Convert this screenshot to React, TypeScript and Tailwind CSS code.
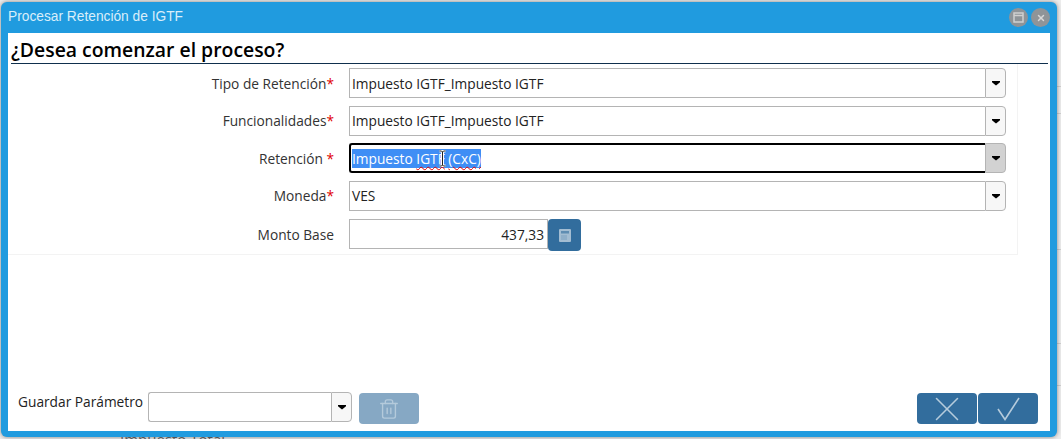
import { Trash2, X } from "lucide-react";

const fields = [
  { label: "Tipo de Retención", required: "*", value: "Impuesto IGTF_Impuesto IGTF", textPad: "pt-[3px]" },
  { label: "Funcionalidades", required: "*", value: "Impuesto IGTF_Impuesto IGTF", textPad: "pt-[1px]" },
  { label: "Retención ", required: "*", value: "Impuesto IGTF (CxC)", focused: true, textPad: "pt-[2px]" },
  { label: "Moneda", required: "*", value: "VES", textPad: "pt-[1px]" },
];

const spellError = "underline decoration-wavy decoration-[#e60000] decoration-1 underline-offset-[2px]";

function Caret() {
  return (
    <svg width="8" height="5" viewBox="0 0 8 5">
      <path d="M0 0H8V1.2L4 4.5L0 1.2Z" fill="#000" />
    </svg>
  );
}

function ComboButton({ focused }: { focused?: boolean }) {
  return (
    <span
      className={`flex h-[30px] w-[21px] shrink-0 items-center justify-center rounded-r-[4px] border border-[#b4b4b4] ${
        focused ? "bg-[#d2d2d2]" : "bg-[#f7f7f7]"
      }`}
    >
      <Caret />
    </span>
  );
}

function FieldRow({ field }: { field: (typeof fields)[number] }) {
  return (
    <div className={`flex h-[30px] items-center ${field.focused ? "-mt-px" : ""}`}>
      <label className={`w-[326px] text-right text-[13.72px] text-[#333] ${field.textPad}`}>
        {field.label}
        <span className="text-[#e00000]">{field.required}</span>
      </label>
      <div className="ml-[15px] flex w-[657px]">
        {field.focused ? (
          <div className="flex h-[30px] flex-1 items-center rounded-l-[3px] border-2 border-r-0 border-black pl-[1px] text-[13.72px] text-white">
            <span className="relative bg-[#3f8ef5] leading-[19px]">
              Impuesto <span className={spellError}>IGTF</span> <span className={spellError}>(CxC)</span>
              <svg className="absolute left-[86px] top-[1px]" width="9" height="17" viewBox="0 0 9 17">
                <path
                  d="M1.5 1H3.5L4.5 2L5.5 1H7.5M4.5 2V15M1.5 16H3.5L4.5 15L5.5 16H7.5"
                  fill="none"
                  stroke="#fff"
                  strokeWidth="3"
                />
                <path
                  d="M1.5 1H3.5L4.5 2L5.5 1H7.5M4.5 2V15M1.5 16H3.5L4.5 15L5.5 16H7.5"
                  fill="none"
                  stroke="#222"
                  strokeWidth="1"
                />
              </svg>
            </span>
          </div>
        ) : (
          <div
            className={`flex h-[30px] flex-1 items-center border border-r-0 border-[#b4b4b4] pl-[2px] text-[13.72px] text-[#222] ${field.textPad}`}
          >
            {field.value}
          </div>
        )}
        <ComboButton focused={field.focused} />
      </div>
    </div>
  );
}

export default function App() {
  return (
    <div className="relative h-[439px] w-[1061px] overflow-hidden bg-[#ececec] font-['Open_Sans','Noto_Sans',sans-serif]">
      <div className="absolute left-[120px] top-[428px] text-[15px] text-[#666]">Impuesto Total</div>
      <div className="absolute right-0 top-0 flex w-[5px] flex-col">
        <div className="h-[87px] border-b border-[#cfcfcf]" />
        <div className="h-[27px] border-b border-[#cfcfcf]" />
        <div className="h-[136px] border-b border-[#cfcfcf]" />
        <div className="h-[94px] border-b border-[#cfcfcf]" />
        <div className="h-[42px] border-b border-[#cfcfcf]" />
      </div>
      <div className="relative ml-[1px] mt-[2px] flex h-[435px] w-[1056px] flex-col rounded-[6px] bg-[#209bdf] px-[7px] pb-[6px] shadow-[0_0_4px_rgba(0,0,0,0.45)]">
        <div className="flex h-[31px] shrink-0 items-center justify-between">
          <span className="font-['Liberation_Sans',sans-serif] text-[13.75px] text-[#d9eefa]">
            Procesar Retención de IGTF
          </span>
          <div className="flex gap-[3px]">
            <span className="flex h-[19px] w-[19px] items-center justify-center rounded-full bg-[#8f9498]">
              <svg width="11" height="11" viewBox="0 0 11 11">
                <path d="M1 1H10V10H1ZM1 3.5H10" fill="none" stroke="#d0d0d0" strokeWidth="1.5" />
              </svg>
            </span>
            <span className="flex h-[19px] w-[19px] items-center justify-center rounded-full bg-[#8f9498]">
              <X size={10} strokeWidth={3.5} className="text-[#d8d8d8]" />
            </span>
          </div>
        </div>
        <div className="flex min-h-0 flex-1 flex-col bg-white">
          <div className="ml-[3px] mr-[2px] h-[31px] shrink-0 border-b border-[#0f2f4d]">
            <h1 className="text-[19.4px] font-semibold leading-[34px] text-black">¿Desea comenzar el proceso?</h1>
          </div>
          <div className="flex w-[1010px] flex-col gap-[8px] border-b border-r border-[#f3f3f3] pb-[5px] pt-[4px]">
            {fields.map((field) => (
              <FieldRow key={field.label} field={field} />
            ))}
            <div className="flex h-[30px] items-start">
              <label className="flex h-[30px] w-[326px] items-center justify-end pt-[3px] text-[13.72px] text-[#333]">
                Monto Base
              </label>
              <div className="ml-[15px] flex items-start">
                <div className="flex h-[30px] w-[199px] items-center justify-end border border-[#b4b4b4] pr-[3px] pt-[3px] text-[13.72px] text-[#222]">
                  437,33
                </div>
                <button className="flex h-[32px] w-[33px] items-center justify-center rounded-[4px] bg-[#326d9d]">
                  <svg width="12" height="13" viewBox="0 0 12 13">
                    <rect width="12" height="13" rx="1" fill="#a3bdd2" />
                    <rect x="2" y="2" width="8" height="2.5" fill="#5f8db2" />
                    <rect x="2" y="6" width="6" height="5" fill="#8fafc9" />
                  </svg>
                </button>
              </div>
            </div>
          </div>
          <div className="mt-auto flex items-start justify-between pb-[7px] pl-[10px] pr-[12px]">
            <div className="flex items-start">
              <span className="mr-[5px] text-[13.72px] leading-[19px] text-[#222]">Guardar Parámetro</span>
              <div className="flex">
                <div className="h-[30px] w-[183px] rounded-l-[3px] border border-r-0 border-[#b4b4b4]" />
                <ComboButton />
              </div>
              <button className="ml-[7px] mt-[1px] flex h-[31px] w-[60px] items-center justify-center rounded-[4px] bg-[#86a8c4]">
                <Trash2 size={22} strokeWidth={1.5} className="text-[#b4cadb]" />
              </button>
            </div>
            <div className="mt-[1px] flex gap-[1px]">
              <button className="flex h-[31px] w-[60px] items-center justify-center rounded-[4px] bg-[#326d9d]">
                <X size={42} strokeWidth={0.9} className="shrink-0 text-[#b5cbdc]" />
              </button>
              <button className="flex h-[31px] w-[60px] items-center justify-center rounded-[4px] bg-[#326d9d]">
                <svg width="23" height="24" viewBox="0 0 23 24">
                  <path d="M1 12L8 22.5L22 1" fill="none" stroke="#b5cbdc" strokeWidth="1.6" />
                </svg>
              </button>
            </div>
          </div>
        </div>
      </div>
    </div>
  );
}
